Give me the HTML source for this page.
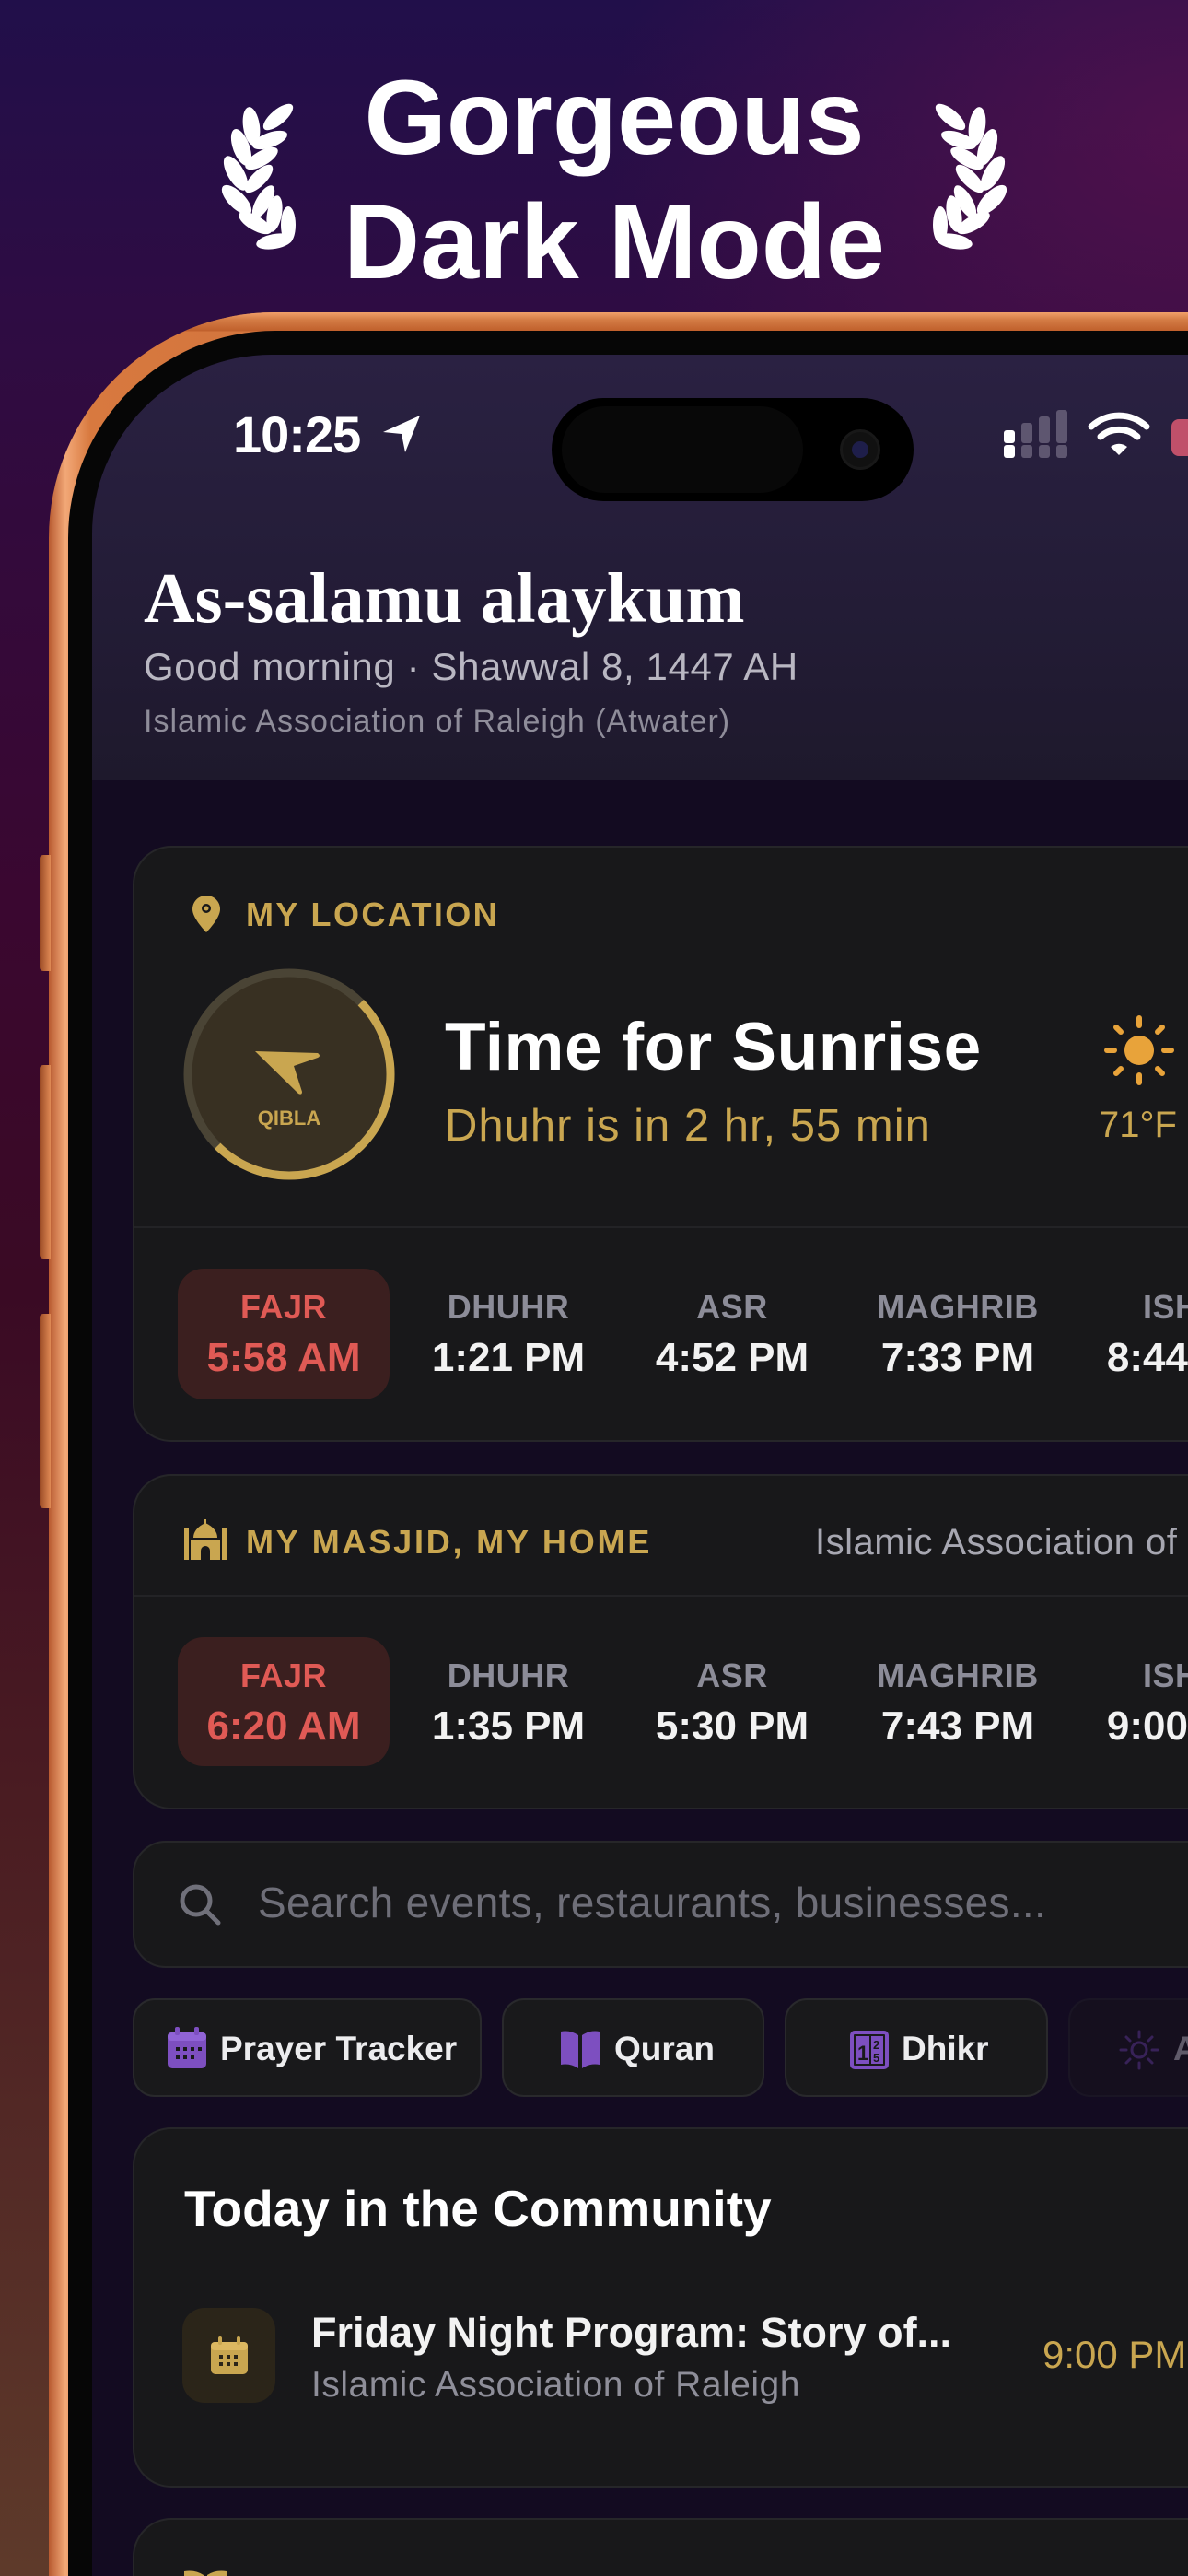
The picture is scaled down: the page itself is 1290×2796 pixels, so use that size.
<!DOCTYPE html>
<html><head><meta charset="utf-8"><style>
*{margin:0;padding:0;box-sizing:border-box}
html,body{width:1290px;height:2796px;overflow:hidden}
body{font-family:"Liberation Sans",sans-serif}
#wrap{position:relative;width:1290px;height:2796px;overflow:hidden;
background:linear-gradient(180deg,#210f4a 0%,#2e0c43 12%,#3a0730 35%,#3a0a24 50%,#4a1c22 70%,#5e3a2a 100%);}
.ovl{position:absolute;inset:0;background:radial-gradient(ellipse 900px 700px at 1290px 150px,rgba(110,20,80,.55),rgba(0,0,0,0) 70%)}
.t{position:absolute;white-space:nowrap;line-height:1}
.title{position:absolute;left:0;width:1334px;text-align:center;color:#fff;font-weight:700;font-size:115px;line-height:1}
.frame{position:absolute;left:53px;top:339px;width:1500px;height:3000px;border-radius:245px;
background:linear-gradient(90deg,#b85a30 0%,#f2a877 1.2%,#d8793f 3%,#c46a38 50%,#d98752 100%)}
.frame2{position:absolute;left:53px;top:339px;width:1500px;height:3000px;border-radius:245px;
background:linear-gradient(180deg,#f0a06a 0,#d47c45 8px,#c0602c 20px,rgba(0,0,0,0) 21px)}
.bezel{position:absolute;left:74px;top:359px;width:1450px;height:2900px;border-radius:225px;background:#060606}
.btn{position:absolute;left:43px;width:12px;border-radius:4px 0 0 4px;background:linear-gradient(90deg,#9a4a25,#e08a55)}
.screen{position:absolute;left:100px;top:385px;width:1400px;height:2800px;border-radius:195px;overflow:hidden;background:#130b21}
.hdr{position:absolute;left:0;top:0;width:1400px;height:462px;background:linear-gradient(180deg,#2a2142 0%,#231c36 60%,#1e192c 100%)}
.card{position:absolute;left:44px;width:1400px;background:#18181a;border:2px solid #262629;border-radius:42px}
.lbl{color:#c9a650;font-weight:700;font-size:36px;letter-spacing:2.4px}
.col{position:absolute;width:230px;text-align:center;line-height:1;white-space:nowrap}
.pl{font-size:36px;color:#8c8c98;font-weight:700;letter-spacing:.5px}
.pt{font-size:44px;color:#f2f2f2;font-weight:700}
.fbox{position:absolute;left:47px;width:230px;background:#3b1f1f;border-radius:28px}
.chip{position:absolute;top:1784px;height:107px;background:#19191b;border:2px solid #29292c;border-radius:24px}
.ct{position:absolute;top:34px;font-size:37px;font-weight:700;color:#ececee;line-height:1;white-space:nowrap}
</style></head><body><div id="wrap">
<div class="ovl"></div>

<div class="title" style="top:71px">Gorgeous</div>
<div class="title" style="top:206px">Dark Mode</div>

<svg style="position:absolute;left:0;top:0" width="1290" height="300">
<g id="lau" fill="#fff">
<ellipse cx="273" cy="137" rx="9" ry="21" transform="rotate(-8 273 137)"/>
<ellipse cx="302" cy="127" rx="8" ry="20" transform="rotate(50 302 127)"/>
<ellipse cx="262" cy="160" rx="9" ry="21" transform="rotate(-20 262 160)"/>
<ellipse cx="293" cy="152" rx="8" ry="20" transform="rotate(70 293 152)"/>
<ellipse cx="256" cy="188" rx="9" ry="21" transform="rotate(-30 256 188)"/>
<ellipse cx="284" cy="172" rx="8" ry="20" transform="rotate(60 284 172)"/>
<ellipse cx="257" cy="217" rx="9" ry="21" transform="rotate(-45 257 217)"/>
<ellipse cx="281" cy="194" rx="8" ry="20" transform="rotate(45 281 194)"/>
<ellipse cx="286" cy="219" rx="8" ry="20" transform="rotate(30 286 219)"/>
<ellipse cx="298" cy="232" rx="8" ry="20" transform="rotate(10 298 232)"/>
<ellipse cx="277" cy="242" rx="8" ry="20" transform="rotate(-60 277 242)"/>
<ellipse cx="313" cy="244" rx="8" ry="20"/>
<ellipse cx="298" cy="262" rx="8" ry="20" transform="rotate(80 298 262)"/>
</g>
<use href="#lau" transform="translate(1334 0) scale(-1 1)"/>
</svg>

<div class="frame"></div>
<div class="frame2"></div>
<div class="btn" style="top:928px;height:126px"></div>
<div class="btn" style="top:1156px;height:210px"></div>
<div class="btn" style="top:1426px;height:211px"></div>
<div class="bezel"></div>

<div class="screen">
  <div class="hdr"></div>
  <div class="t" style="left:153px;top:59px;font-size:56px;color:#fff;font-weight:700;letter-spacing:-1px">10:25</div>
  <svg style="position:absolute;left:314px;top:64px" width="44" height="44" viewBox="0 0 44 44"><path d="M2 20 L42 2 L26 42 L22 22 Z" fill="#fff"/></svg>
  <div style="position:absolute;left:499px;top:47px;width:393px;height:112px;border-radius:56px;background:#000"></div>
  <div style="position:absolute;left:510px;top:56px;width:262px;height:94px;border-radius:47px;background:#080808"></div>
  <div style="position:absolute;left:812px;top:81px;width:44px;height:44px;border-radius:50%;background:#111;border:3px solid #181818"></div>
  <div style="position:absolute;left:825px;top:94px;width:18px;height:18px;border-radius:50%;background:#1e1e4a"></div>
  <svg style="position:absolute;left:990px;top:60px" width="200" height="52">
    <rect x="0" y="22" width="12" height="14" rx="3" fill="#fff"/><rect x="0" y="38" width="12" height="14" rx="3" fill="#fff"/>
    <rect x="19" y="14" width="12" height="22" rx="3" fill="#5e5670"/><rect x="19" y="38" width="12" height="14" rx="3" fill="#5e5670"/>
    <rect x="38" y="7" width="12" height="29" rx="3" fill="#5e5670"/><rect x="38" y="38" width="12" height="14" rx="3" fill="#5e5670"/>
    <rect x="57" y="0" width="12" height="36" rx="3" fill="#5e5670"/><rect x="57" y="38" width="12" height="14" rx="3" fill="#5e5670"/>
    <path d="M95 18 A44 44 0 0 1 155 18" stroke="#fff" stroke-width="7" fill="none" stroke-linecap="round"/>
    <path d="M105 29 A30 30 0 0 1 145 29" stroke="#fff" stroke-width="7" fill="none" stroke-linecap="round"/>
    <path d="M116 40 L125 49 L134 40 A14 14 0 0 0 116 40Z" fill="#fff"/>
    <rect x="182" y="10" width="30" height="40" rx="8" fill="#c0506a"/>
  </svg>

  <div class="t" style="left:56px;top:226px;font-family:'Liberation Serif',serif;font-weight:700;font-size:77px;color:#fff">As-salamu alaykum</div>
  <div class="t" style="left:56px;top:318px;font-size:42px;color:#b9b7c2;letter-spacing:.6px">Good morning · Shawwal 8, 1447 AH</div>
  <div class="t" style="left:56px;top:381px;font-size:34px;color:#8f8d9a;letter-spacing:1px">Islamic Association of Raleigh (Atwater)</div>

  <div class="card" style="top:533px;height:647px">
    <svg style="position:absolute;left:60px;top:50px" width="36" height="44" viewBox="0 0 36 44"><path d="M18 2C9 2 3 9 3 17c0 10 15 25 15 25s15-15 15-25C33 9 27 2 18 2z" fill="#c9a650"/><circle cx="18" cy="16" r="5" fill="#18181a"/><circle cx="18" cy="16" r="2.5" fill="#c9a650"/></svg>
    <div class="t lbl" style="left:121px;top:55px">MY LOCATION</div>
    <svg style="position:absolute;left:51px;top:129px" width="234" height="234" viewBox="0 0 234 234">
      <circle cx="117" cy="117" r="114" fill="#383022"/>
      <circle cx="117" cy="117" r="110" fill="none" stroke="#4a4435" stroke-width="9"/>
      <path d="M194.8 39.2 A110 110 0 0 1 39.2 194.8" fill="none" stroke="#c9a650" stroke-width="9"/>
      <path d="M80 92 L148 94 Q152 97 148 99 L122 108 L131 136 Q131 140 127 138 Z" fill="#c9a650"/>
      <text x="117" y="172" text-anchor="middle" font-family="Liberation Sans" font-weight="700" font-size="22" fill="#c9a650">QIBLA</text>
    </svg>
    <div class="t" style="left:337px;top:180px;font-size:73px;font-weight:700;color:#fff;letter-spacing:.5px">Time for Sunrise</div>
    <div class="t" style="left:337px;top:278px;font-size:49px;color:#c9a650;letter-spacing:1px">Dhuhr is in 2 hr, 55 min</div>
    <svg style="position:absolute;left:1052px;top:181px" width="78" height="78" viewBox="0 0 78 78">
      <circle cx="39" cy="39" r="16" fill="#e8a33a"/>
      <g stroke="#e8a33a" stroke-width="6" stroke-linecap="round">
      <line x1="39" y1="4" x2="39" y2="12"/><line x1="39" y1="66" x2="39" y2="74"/><line x1="4" y1="39" x2="12" y2="39"/><line x1="66" y1="39" x2="74" y2="39"/>
      <line x1="14" y1="14" x2="19" y2="19"/><line x1="59" y1="59" x2="64" y2="64"/><line x1="14" y1="64" x2="19" y2="59"/><line x1="59" y1="19" x2="64" y2="14"/></g>
    </svg>
    <div class="t" style="left:1047px;top:281px;font-size:40px;color:#c9a650">71°F</div>
    <div style="position:absolute;left:0;top:411px;width:1400px;height:2px;background:#232326"></div>
    <div class="fbox" style="top:457px;height:142px"></div>
    <div class="col pl" style="left:47px;top:481px;color:#e05a55">FAJR</div>
    <div class="col pt" style="left:47px;top:532px;color:#e05a55">5:58 AM</div>
    <div class="col pl" style="left:291px;top:481px">DHUHR</div>
    <div class="col pt" style="left:291px;top:532px">1:21 PM</div>
    <div class="col pl" style="left:534px;top:481px">ASR</div>
    <div class="col pt" style="left:534px;top:532px">4:52 PM</div>
    <div class="col pl" style="left:779px;top:481px">MAGHRIB</div>
    <div class="col pt" style="left:779px;top:532px">7:33 PM</div>
    <div class="col pl" style="left:1024px;top:481px">ISHA</div>
    <div class="col pt" style="left:1024px;top:532px">8:44 PM</div>
  </div>

  <div class="card" style="top:1215px;height:364px">
    <svg style="position:absolute;left:52px;top:47px" width="50" height="44" viewBox="0 0 50 44">
      <path d="M25 4 C16 8 12 14 12 20 L38 20 C38 14 34 8 25 4Z" fill="#c9a650"/>
      <rect x="24" y="0" width="2" height="6" fill="#c9a650"/>
      <rect x="2" y="10" width="5" height="34" fill="#c9a650"/><rect x="43" y="10" width="5" height="34" fill="#c9a650"/>
      <rect x="9" y="22" width="32" height="22" fill="#c9a650"/>
      <path d="M20 44 L20 34 A5 5 0 0 1 30 34 L30 44Z" fill="#18181a"/>
    </svg>
    <div class="t lbl" style="left:121px;top:54px;letter-spacing:2.8px">MY MASJID, MY HOME</div>
    <div class="t" style="left:739px;top:52px;font-size:40px;color:#a7a7b1;letter-spacing:.5px">Islamic Association of Raleigh (Atwater)</div>
    <div style="position:absolute;left:0;top:129px;width:1400px;height:2px;background:#232326"></div>
    <div class="fbox" style="top:175px;height:140px"></div>
    <div class="col pl" style="left:47px;top:199px;color:#e05a55">FAJR</div>
    <div class="col pt" style="left:47px;top:250px;color:#e05a55">6:20 AM</div>
    <div class="col pl" style="left:291px;top:199px">DHUHR</div>
    <div class="col pt" style="left:291px;top:250px">1:35 PM</div>
    <div class="col pl" style="left:534px;top:199px">ASR</div>
    <div class="col pt" style="left:534px;top:250px">5:30 PM</div>
    <div class="col pl" style="left:779px;top:199px">MAGHRIB</div>
    <div class="col pt" style="left:779px;top:250px">7:43 PM</div>
    <div class="col pl" style="left:1024px;top:199px">ISHA</div>
    <div class="col pt" style="left:1024px;top:250px">9:00 PM</div>
  </div>

  <div class="card" style="top:1613px;height:138px;border-radius:36px">
    <svg style="position:absolute;left:47px;top:43px" width="50" height="50" viewBox="0 0 50 50"><circle cx="20" cy="20" r="15" fill="none" stroke="#70707a" stroke-width="5"/><line x1="31" y1="31" x2="44" y2="44" stroke="#70707a" stroke-width="5" stroke-linecap="round"/></svg>
    <div class="t" style="left:134px;top:42px;font-size:46px;color:#6e6e78;letter-spacing:.3px">Search events, restaurants, businesses...</div>
  </div>

  <div class="chip" style="left:44px;width:379px">
    <svg style="position:absolute;left:35px;top:29px" width="44" height="46" viewBox="0 0 44 46"><rect x="1" y="6" width="42" height="39" rx="5" fill="#7d4fc0"/><rect x="1" y="6" width="42" height="9" rx="4" fill="#9063d6"/><rect x="9" y="0" width="5" height="9" rx="2" fill="#7d4fc0"/><rect x="30" y="0" width="5" height="9" rx="2" fill="#7d4fc0"/><g fill="#19191b"><rect x="10" y="22" width="4" height="4"/><rect x="18" y="22" width="4" height="4"/><rect x="26" y="22" width="4" height="4"/><rect x="34" y="22" width="4" height="4"/><rect x="10" y="31" width="4" height="4"/><rect x="18" y="31" width="4" height="4"/><rect x="26" y="31" width="4" height="4"/></g></svg>
    <div class="ct" style="left:93px">Prayer Tracker</div>
  </div>
  <div class="chip" style="left:445px;width:285px">
    <svg style="position:absolute;left:60px;top:30px" width="46" height="46" viewBox="0 0 46 46"><path d="M2 4 Q12 2 21 8 L21 44 Q12 38 2 40Z" fill="#7d4fc0"/><path d="M44 4 Q34 2 25 8 L25 44 Q34 38 44 40Z" fill="#7d4fc0"/></svg>
    <div class="ct" style="left:120px">Quran</div>
  </div>
  <div class="chip" style="left:752px;width:286px">
    <svg style="position:absolute;left:69px;top:33px" width="42" height="42" viewBox="0 0 42 42"><rect x="2" y="2" width="38" height="38" rx="3" fill="none" stroke="#7d4fc0" stroke-width="4"/><rect x="6" y="6" width="30" height="30" fill="#7d4fc0"/><rect x="21" y="6" width="2" height="30" fill="#19191b"/><text x="8" y="32" font-family="Liberation Sans" font-size="22" font-weight="700" fill="#19191b">1</text><text x="25" y="20" font-family="Liberation Sans" font-size="13" font-weight="700" fill="#19191b">2</text><text x="25" y="34" font-family="Liberation Sans" font-size="13" font-weight="700" fill="#19191b">5</text></svg>
    <div class="ct" style="left:125px">Dhikr</div>
  </div>
  <div class="chip" style="left:1060px;width:300px;opacity:.35">
    <svg style="position:absolute;left:53px;top:32px" width="44" height="44" viewBox="0 0 44 44"><circle cx="22" cy="22" r="8" fill="none" stroke="#7d4fc0" stroke-width="3"/><g stroke="#7d4fc0" stroke-width="3" stroke-linecap="round"><line x1="22" y1="2" x2="22" y2="8"/><line x1="22" y1="36" x2="22" y2="42"/><line x1="2" y1="22" x2="8" y2="22"/><line x1="36" y1="22" x2="42" y2="22"/><line x1="8" y1="8" x2="12" y2="12"/><line x1="32" y1="32" x2="36" y2="36"/><line x1="8" y1="36" x2="12" y2="32"/><line x1="32" y1="12" x2="36" y2="8"/></g></svg>
    <div class="ct" style="left:112px">Adhkar</div>
  </div>

  <div class="card" style="top:1924px;height:391px">
    <div class="t" style="left:54px;top:59px;font-size:55px;font-weight:700;color:#fff">Today in the Community</div>
    <div style="position:absolute;left:52px;top:194px;width:101px;height:103px;border-radius:24px;background:#2b2519"></div>
    <svg style="position:absolute;left:82px;top:225px" width="42" height="42" viewBox="0 0 42 42"><rect x="1" y="6" width="40" height="35" rx="5" fill="#c9a650"/><rect x="1" y="6" width="40" height="9" rx="4" fill="#dcb861"/><rect x="9" y="0" width="4" height="9" rx="2" fill="#c9a650"/><rect x="29" y="0" width="4" height="9" rx="2" fill="#c9a650"/><g fill="#2b2519"><rect x="10" y="20" width="4" height="4"/><rect x="18" y="20" width="4" height="4"/><rect x="26" y="20" width="4" height="4"/><rect x="10" y="28" width="4" height="4"/><rect x="18" y="28" width="4" height="4"/><rect x="26" y="28" width="4" height="4"/></g></svg>
    <div class="t" style="left:192px;top:198px;font-size:45px;font-weight:700;color:#f2f2f2">Friday Night Program: Story of...</div>
    <div class="t" style="left:192px;top:258px;font-size:39px;color:#8e8e99;letter-spacing:.5px">Islamic Association of Raleigh</div>
    <div class="t" style="left:986px;top:224px;font-size:42px;color:#c9a650">9:00 PM</div>
  </div>

  <div class="card" style="top:2348px;height:400px">
    <svg style="position:absolute;left:52px;top:52px" width="50" height="40" viewBox="0 0 50 40"><path d="M2 4 Q14 2 23 8 L23 40 Q14 34 2 36Z" fill="#c9a650"/><path d="M48 4 Q36 2 27 8 L27 40 Q36 34 48 36Z" fill="#c9a650"/></svg>
  </div>
</div>
</div></body></html>
